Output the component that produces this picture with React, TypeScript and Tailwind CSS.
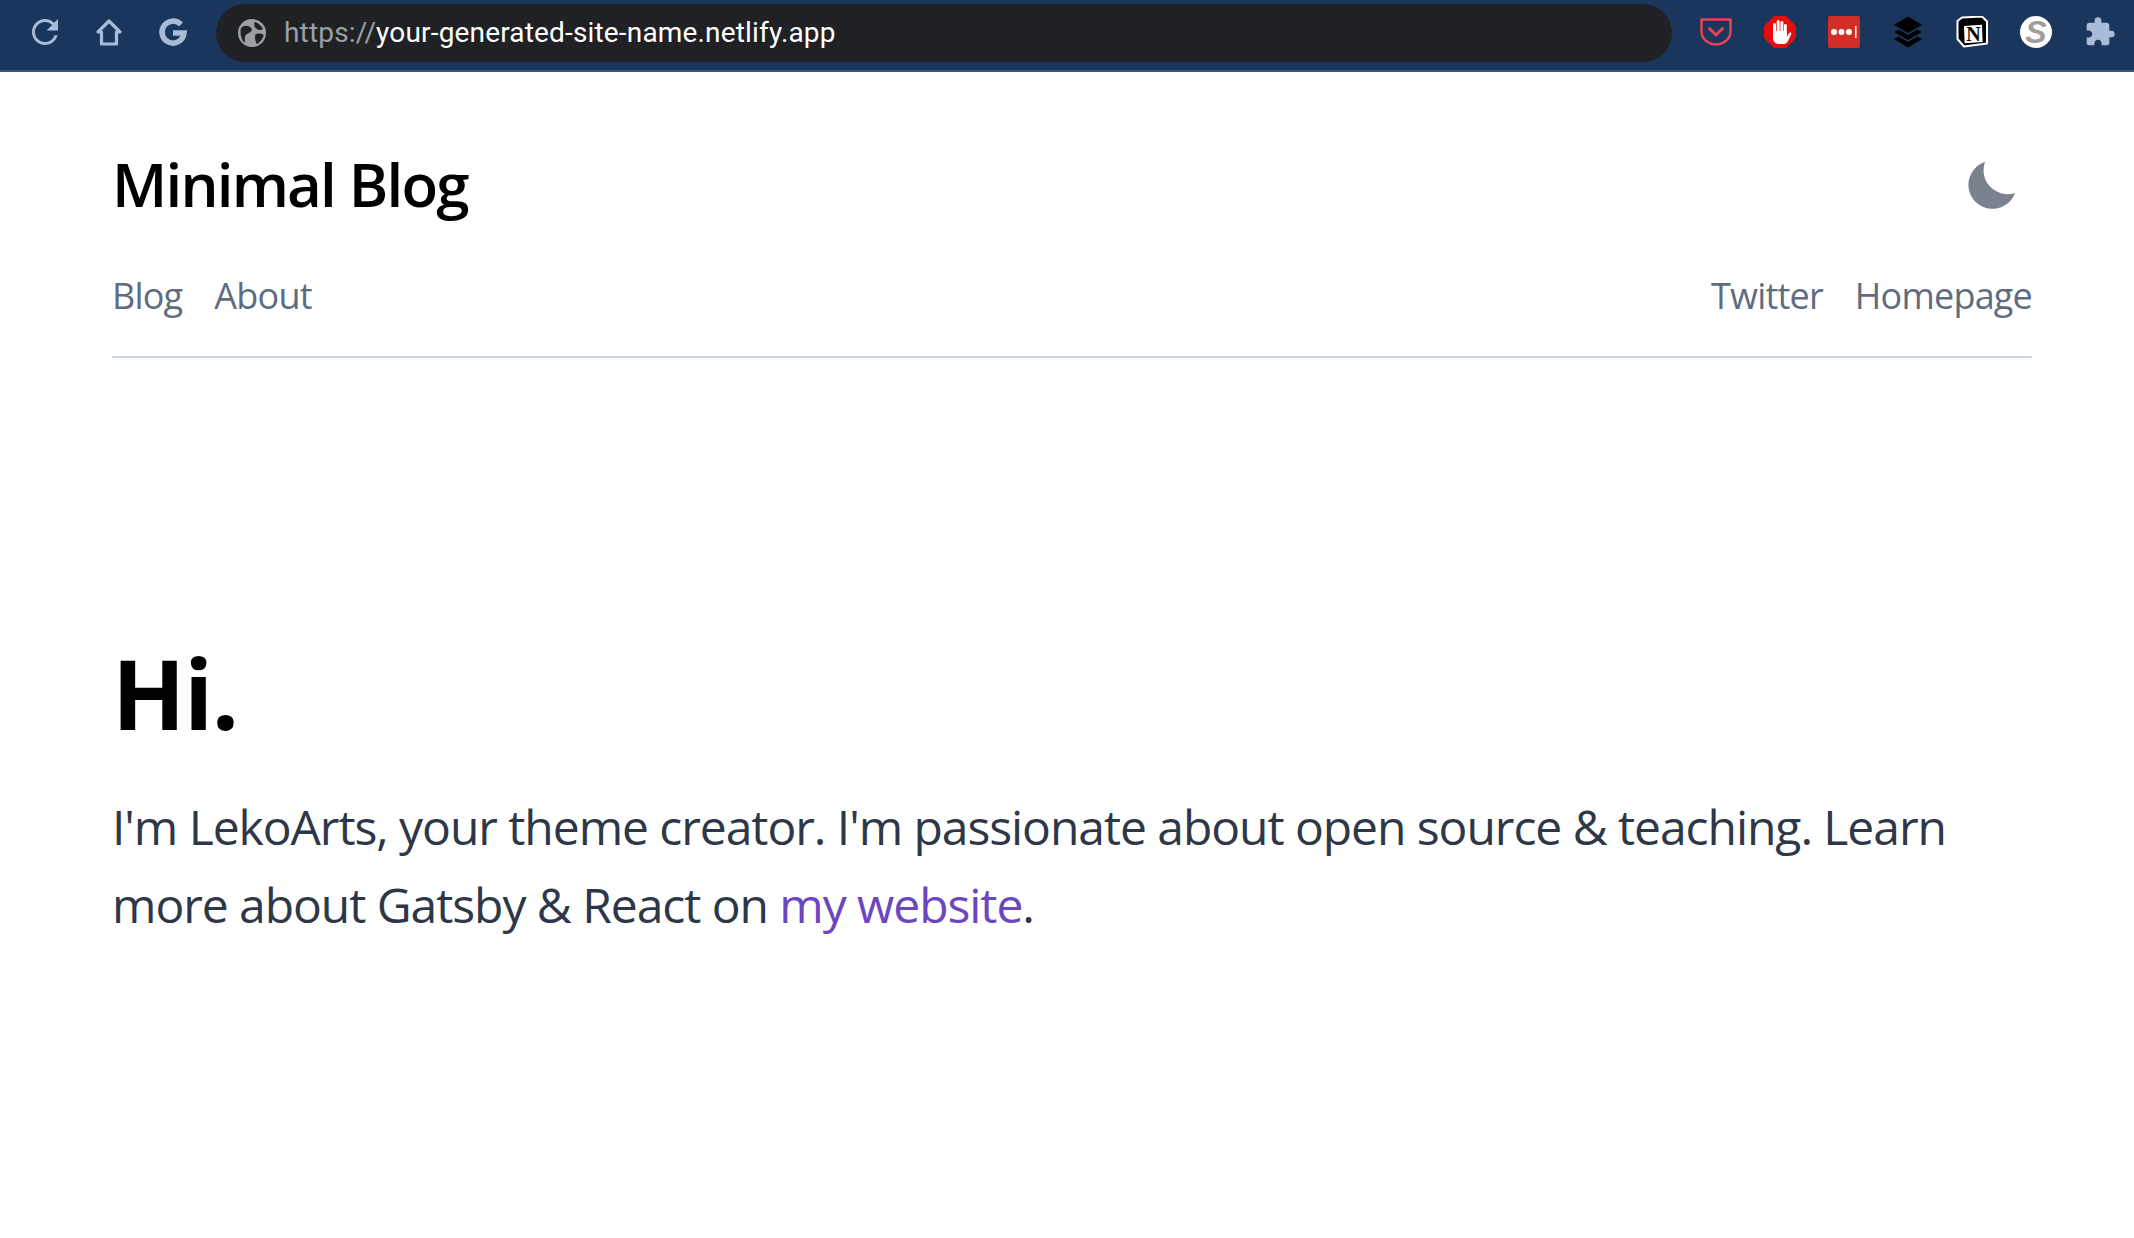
import React from "react";

const Toolbar = () => (
  <div className="h-[72px] bg-[#1b365d] border-b-2 border-[#36557d] flex items-center pl-[29px] pr-[18px] pb-[6px] shrink-0">
    <div className="flex items-center gap-[32px] text-[#a8bbd9] mr-[27px]">
      <svg width="32" height="32" viewBox="4 4 16 16" fill="currentColor" className="w-[32px] h-[32px] p-[3px]"><path d="M17.65 6.35C16.2 4.9 14.21 4 12 4c-4.42 0-7.99 3.58-7.99 8s3.57 8 7.99 8c3.73 0 6.84-2.55 7.73-6h-1.9c-.82 2.5-3.1 4.200-5.830 4.200-3.420 0-6.200-2.780-6.200-6.200s2.780-6.200 6.200-6.200c1.700 0 3.250.7 4.400 1.850L13 11h7V4l-2.350 2.350z" /></svg>
      <svg width="32" height="32" viewBox="0 0 32 32" fill="none" stroke="currentColor" strokeWidth="3.200" strokeLinejoin="round"><path d="M16 5L5 16h3.500v12h15V16H27z" /></svg>
      <svg width="32" height="32" viewBox="0 0 32 32" fill="none" stroke="currentColor" strokeWidth="5.500"><path d="M24 8.500A11 11 0 1 0 27 17H16" /></svg>
    </div>
    <div className="h-[58px] w-[1456px] mt-[2px] rounded-[29px] bg-[#202124] flex items-center pl-[22px] font-['Roboto',sans-serif] text-[28px] tracking-[0.17px]">
      <svg width="28" height="28" viewBox="0 0 24 24" className="mr-[18px]"><circle cx="12" cy="12" r="12" fill="#9aa0a6" /><path d="M2.500 8c3-3 6-2.500 8.500-.500s-1 4.500-3.500 5.500-1 5-2 7.500C3 18 1.500 13 2.500 8zM14 2.500c3 .5 6 3 7.500 6-3 2-6 .5-7.500-2.500zM15 13c3-1 6-.5 7 1-1 3.500-3.500 6.500-6 7.500-1-2-2-6.500-1-8.500z" fill="#202124" /></svg>
      <span className="text-[#9aa0a6]">https://</span><span className="text-white">your-generated-site-name.netlify.app</span>
    </div>
    <div className="ml-auto flex items-center gap-[32px]">
      <svg width="32" height="32" viewBox="0 0 32 32" fill="none" stroke="#ef4056" strokeWidth="2.500"><path d="M1.500 3.500h29v12a14.500 13 0 0 1-29 0z" strokeLinejoin="round" /><path d="M9.500 12.500l6.500 6.500 6.500-6.500" strokeLinecap="round" strokeLinejoin="round" strokeWidth="3" /></svg>
      <svg width="32" height="32" viewBox="0 0 32 32"><path d="M10 0h12l10 10v12L22 32H10L0 22V10z" fill="#e60d0d" /><g fill="#fff"><rect x="9" y="7" width="3" height="14" rx="1.500" /><rect x="12.700" y="4" width="3" height="15" rx="1.500" /><rect x="16.400" y="5" width="3" height="14" rx="1.500" /><rect x="20" y="8" width="2.800" height="12" rx="1.400" /><path d="M9 15h13.800v5.500l2.500-3.500c.9-1.200 2.600-.2 2 1.100L24 25c-1 1.800-2.500 3-4.500 3h-4.500c-3.500 0-6-2.500-6-6z" /></g></svg>
      <svg width="32" height="32" viewBox="0 0 32 32"><rect width="32" height="32" rx="2" fill="#d32d27" /><circle cx="6" cy="16" r="3" fill="#fff" /><circle cx="13.500" cy="16" r="3" fill="#fff" /><circle cx="21" cy="16" r="3" fill="#fff" /><rect x="27" y="10" width="1.500" height="12" fill="#fff" /></svg>
      <svg width="32" height="32" viewBox="0 0 32 32" fill="#000"><path d="M16 0.500l14 8.500-14 8-14-8z" /><path d="M6.500 13.500l9.500 5.500 9.500-5.500 4.500 2.500-14 8-14-8z" /><path d="M6.500 20.500l9.500 5.500 9.500-5.500 4.500 2.500-14 8.500-14-8.500z" /></svg>
      <svg width="32" height="32" viewBox="0 0 32 32"><path d="M6 1.500l20-1 5 5v22l-23 3-6.500-7.500V5z" fill="#000" stroke="#fff" strokeWidth="2" strokeLinejoin="round" /><path d="M8 10l18-1.200 .6 17.200-18 1.200z" fill="#fff" /><text x="17.500" y="25" textAnchor="middle" fontFamily="Liberation Serif" fontWeight="700" fontSize="20" fill="#000">N</text></svg>
      <div className="w-[32px] h-[32px] rounded-full bg-white flex items-center justify-center text-[#9e9e9e] italic font-bold text-[32px] leading-none font-['Liberation_Sans',sans-serif]">S</div>
      <svg width="32" height="32" viewBox="0 0 24 24" fill="#a8bbd9"><path d="M20.500 11H19V7c0-1.100-.9-2-2-2h-4V3.500a2.500 2.500 0 0 0-5 0V5H4c-1.100 0-2 .9-2 2v3.800h1.500c1.500 0 2.700 1.200 2.700 2.700S5 16.200 3.500 16.200H2V20c0 1.100.9 2 2 2h3.800v-1.500c0-1.500 1.200-2.700 2.700-2.700s2.700 1.200 2.700 2.700V22H17c1.100 0 2-.9 2-2v-4h1.500a2.500 2.500 0 0 0 0-5z" /></svg>
    </div>
  </div>
);

export default function App() {
  return (
    <div className="min-h-[1238px] bg-white flex flex-col font-['Open_Sans',sans-serif]">
      <Toolbar />
      <div className="pl-[112px] pr-[102px]">
        <header className="pt-[77px]">
          <div className="flex items-center justify-between h-[70px]">
            <h1 className="text-[60px] leading-none font-semibold text-black tracking-[-1.800px]">Minimal Blog</h1>
            <svg width="48" height="48" viewBox="0 0 48 48" className="mr-[16px] mt-[3px]"><path d="M17 0A24 24 0 1 0 47 31A24 24 0 0 1 17 0z" fill="#7a818f" /></svg>
          </div>
          <div className="flex justify-between items-center mt-[50px] pb-[33px] border-b-2 border-[#cbd5e0] text-[36px] leading-[54px] text-[#5f6c80] tracking-[-0.800px]">
            <nav className="flex gap-[32px]"><a>Blog</a><a>About</a></nav>
            <nav className="flex gap-[32px]"><a>Twitter</a><a>Homepage</a></nav>
          </div>
        </header>
        <main className="mt-[287px]">
          <h2 className="text-[96px] leading-none font-bold text-black tracking-[-1.500px]">Hi.</h2>
          <p className="mt-[47px] text-[48px] leading-[78px] text-[#2d3748] tracking-[-1.050px]">
            I'm LekoArts, your theme creator. I'm passionate about open source &amp; teaching. Learn more about Gatsby &amp; React on <a className="text-[#6b46c1]">my website</a>.
          </p>
        </main>
      </div>
    </div>
  );
}
